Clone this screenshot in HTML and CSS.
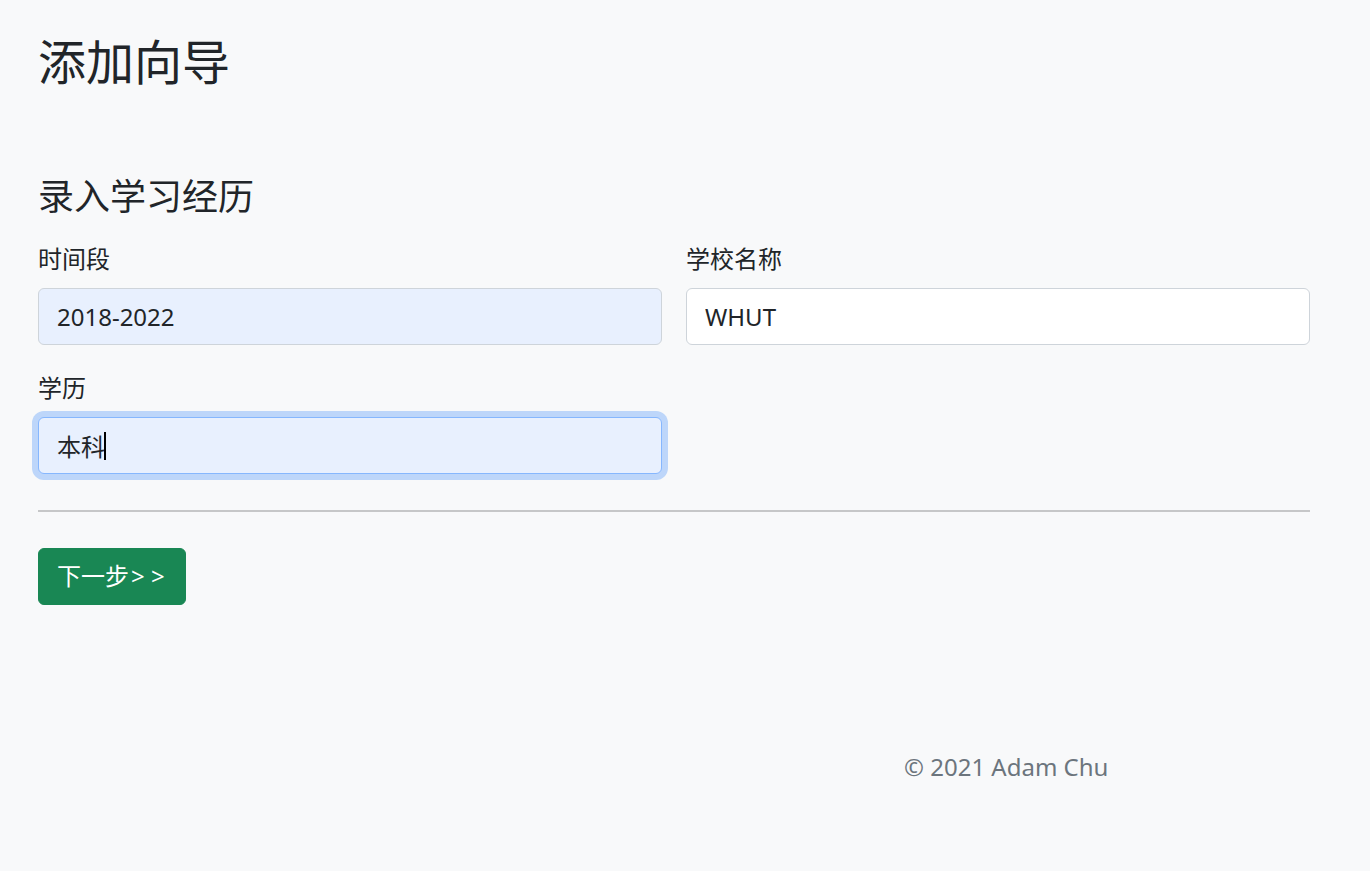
FILE: index.html
```html
<!DOCTYPE html>
<html lang="zh-CN">
<head>
<meta charset="utf-8">
<title>添加向导</title>
<link rel="stylesheet" href="styles.css">
</head>
<body>
<main class="page">
  <h1 class="title">添加向导</h1>
  <h2 class="section-title">录入学习经历</h2>
  <form class="form-grid">
    <div class="field">
      <label class="label" for="period">时间段</label>
      <input class="control autofill" id="period" type="text" value="2018-2022">
    </div>
    <div class="field">
      <label class="label" for="school">学校名称</label>
      <input class="control" id="school" type="text" value="WHUT">
    </div>
    <div class="field">
      <label class="label" for="degree">学历</label>
      <div class="control-wrap">
        <input class="control autofill focused" id="degree" type="text" value="本科">
        <span class="caret"></span>
      </div>
    </div>
  </form>
  <hr class="divider">
  <button class="btn-next" type="button">下一步<span class="arrows">&gt; &gt;</span></button>
  <footer class="footer">
    <span class="copy">© 2021 Adam Chu</span>
  </footer>
</main>
</body>
</html>
```
FILE: styles.css
```css
html, body {
  margin: 0;
  padding: 0;
}
body {
  background: #f8f9fa;
  color: #212529;
  font-family: "Noto Sans", "Noto Sans CJK SC", sans-serif;
  font-size: 24px;
  line-height: 1.5;
}
.page {
  padding: 33px 60px 0 38px;
}
.title {
  margin: 0 0 84px;
  font-size: 48px;
  font-weight: 400;
  line-height: 1.2;
}
.section-title {
  margin: 0 0 23px;
  font-size: 36px;
  font-weight: 400;
  line-height: 1.2;
}
.form-grid {
  display: grid;
  grid-template-columns: 1fr 1fr;
  column-gap: 24px;
  row-gap: 25px;
}
.field {
  display: flex;
  flex-direction: column;
}
.label {
  display: block;
  margin-bottom: 11px;
  line-height: 36px;
}
.control-wrap {
  position: relative;
}
.control {
  box-sizing: border-box;
  display: block;
  width: 100%;
  height: 57px;
  padding: 0 18px;
  font: inherit;
  font-size: 24px;
  color: #212529;
  background: #fff;
  border: 1px solid #ced4da;
  border-radius: 6px;
  outline: none;
  margin: 0;
}
.control.autofill {
  background: #e8f0fe;
}
.control.focused {
  border-color: #86b7fe;
  box-shadow: 0 0 0 6px rgba(13, 110, 253, 0.25);
}
.caret {
  position: absolute;
  left: 66px;
  top: 15px;
  width: 2px;
  height: 28px;
  background: #000;
}
.divider {
  margin: 36px 0 36px;
  border: 0;
  height: 2px;
  background: #c6c7c8;
}
.btn-next {
  display: block;
  height: 57px;
  padding: 0 20px 0 18px;
  font: inherit;
  font-size: 24px;
  color: #fff;
  background: #198754;
  border: 1px solid #198754;
  border-radius: 6px;
  cursor: pointer;
}
.arrows {
  margin-left: 2px;
}
.footer {
  display: flex;
  padding: 144px 0 0 866px;
}
.copy {
  color: #6c757d;
  line-height: 36px;
}
```
